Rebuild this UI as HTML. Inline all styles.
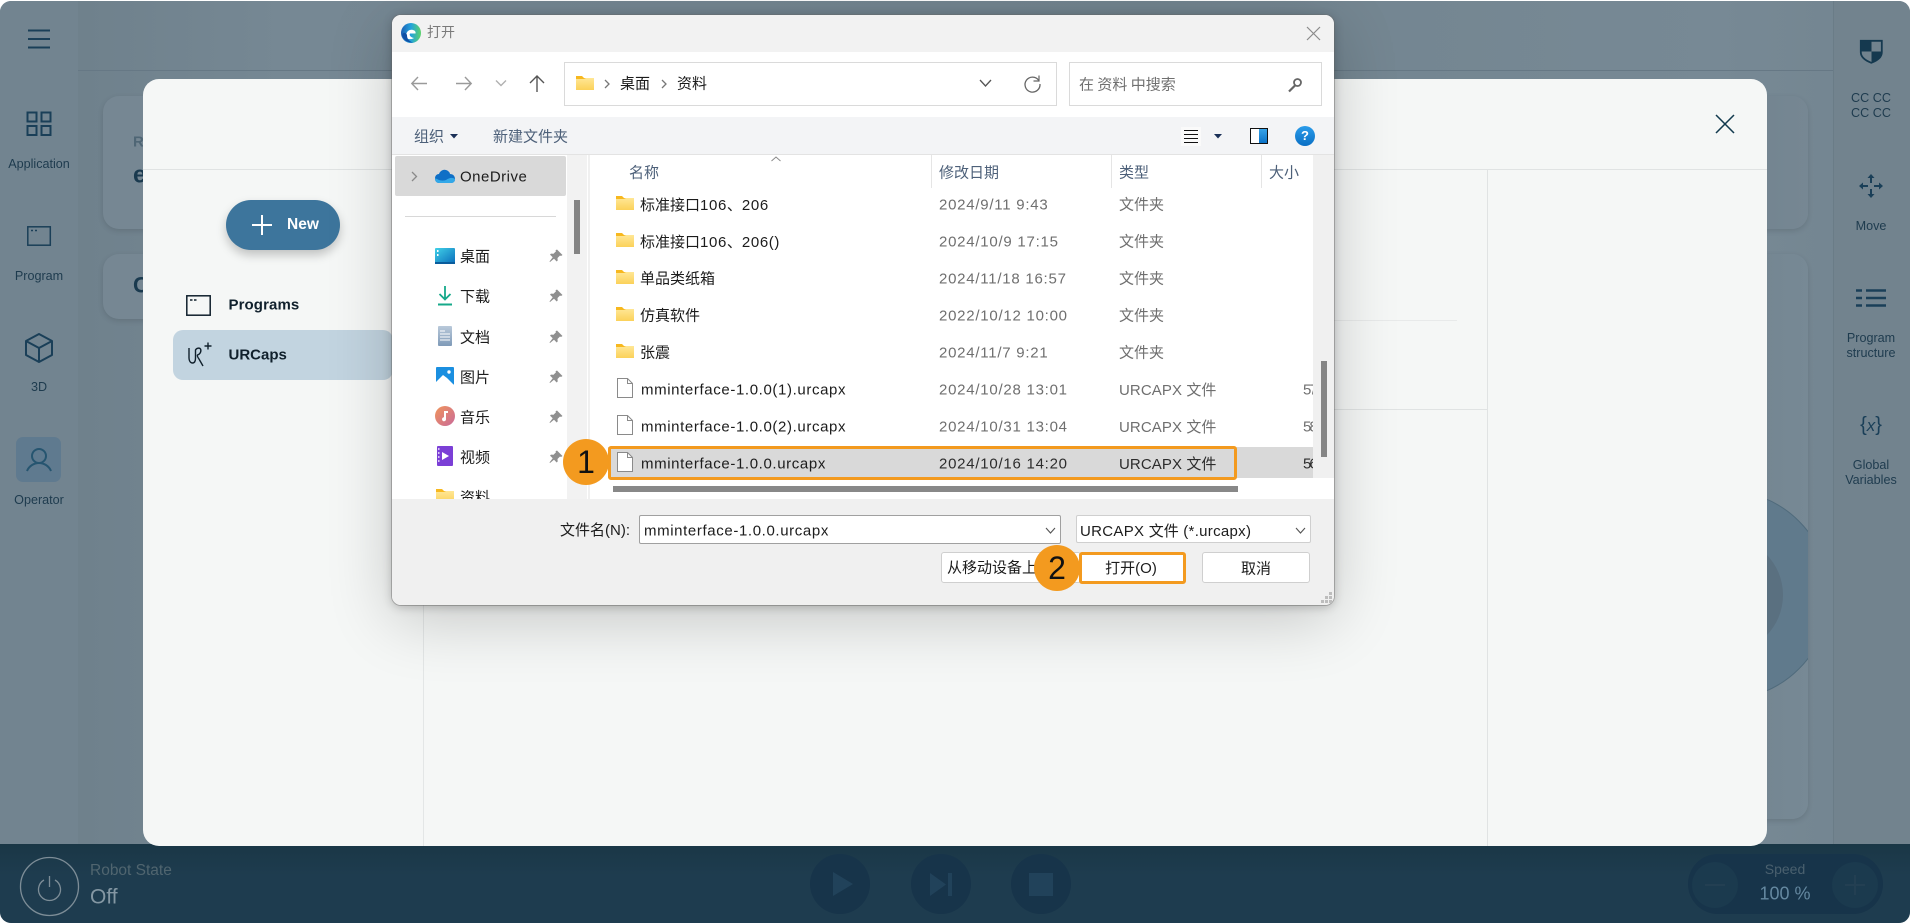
<!DOCTYPE html>
<html lang="zh"><head><meta charset="utf-8"><title>打开</title>
<style>
*{box-sizing:border-box}
html,body{margin:0;padding:0;width:1910px;height:923px;overflow:hidden;background:#fff}
body{position:relative;font-family:"Liberation Sans","Noto Sans CJK SC",sans-serif}
.a{position:absolute}
.t{position:absolute;white-space:nowrap;transform:translateY(-50%);line-height:1.3}
.c{text-align:center;transform:translate(-50%,-50%)}
.l{font-size:12.6px;color:#1e3b4e}
.s{font-family:"Noto Sans CJK SC","Liberation Sans",sans-serif;letter-spacing:0}
.f{font-size:15px;letter-spacing:.62px;color:#1c1c1c;margin-top:1px}
.d{font-size:15px;letter-spacing:.75px;color:#6f6f6f;margin-top:1px}
.u{letter-spacing:.1px}
.h{font-size:15px;color:#4d6079;font-family:"Noto Sans CJK SC",sans-serif}
.n{font-size:15px;color:#1c1c1c;font-family:"Noto Sans CJK SC",sans-serif}
svg{position:absolute;overflow:visible}
</style></head><body>

<svg width="0" height="0" style="position:absolute"><defs>
<linearGradient id="fg" x1="0" y1="0" x2="0" y2="1"><stop offset="0" stop-color="#ffe796"/><stop offset="1" stop-color="#fbd15a"/></linearGradient>
<symbol id="folder" viewBox="0 0 18 14"><path d="M0 0h6l2 2h10v12H0z" fill="#f7b81f"/><path d="M0 3h8l2-1h8v12H0z" fill="url(#fg)"/></symbol>
<symbol id="file" viewBox="0 0 16 20"><path d="M.5.5h10l5 5v14H.5z" fill="#fff" stroke="#8a8a8a"/><path d="M10.5.5v5h5" fill="none" stroke="#8a8a8a"/></symbol>
<symbol id="pin" viewBox="0 0 14 14"><path d="M8 .5l5.5 5.5-1.500 1-1-.5-2.500 2.500.2 2.500-1 1-2.700-2.700L1 13l-.5-.5 3.200-4.200L1 5.600l1-1 2.500.2L7 2.300l-.5-1z" fill="#8f8f8f"/></symbol>
</defs></svg>

<!-- App background -->
<div class="a" style="left:0;top:1px;width:1910px;height:922px;background:linear-gradient(90deg,#6c7e89,#768894 15%,#72848f 60%,#778995 90%,#72848f);border-radius:11px"></div>
<div class="a" style="left:0;top:1px;width:78px;height:850px;background:#728490;border-radius:11px 0 0 0"></div>
<div class="a" style="left:1833px;top:1px;width:77px;height:850px;background:#72838e;border-left:1px solid #6a7c87;border-radius:0 11px 0 0"></div>
<div class="a" style="left:78px;top:70px;width:1755px;height:1px;background:#667885"></div>
<!-- cards -->
<div class="a" style="left:103px;top:96px;width:300px;height:133px;border-radius:16px;background:#768793;box-shadow:0 2px 6px rgba(0,0,0,.12)"></div>
<div class="a" style="left:103px;top:254px;width:300px;height:65px;border-radius:16px;background:#768793;box-shadow:0 2px 6px rgba(0,0,0,.12)"></div>
<div class="t" style="left:133px;top:142px;font-size:15px;font-weight:700;color:#4f6675">R</div>
<div class="t" style="left:133px;top:175px;font-size:24px;font-weight:700;color:#1a3a4f">e</div>
<div class="t" style="left:133px;top:286px;font-size:22px;font-weight:700;color:#1a3a4f">C</div>
<div class="a" style="left:1600px;top:96px;width:208px;height:133px;border-radius:16px;background:linear-gradient(90deg,#6a7c87,#768793);box-shadow:0 2px 6px rgba(0,0,0,.12)"></div>
<div class="a" style="left:1600px;top:254px;width:208px;height:565px;border-radius:16px;background:linear-gradient(90deg,#6a7c87,#778995);box-shadow:0 2px 6px rgba(0,0,0,.12);overflow:hidden">
  <div class="a" style="left:20px;top:236px;width:210px;height:210px;border-radius:50%;background:#607a8c;border:1.500px solid #506b7c"></div>
  <div class="a" style="left:67px;top:283px;width:116px;height:116px;border-radius:50%;background:#5a7080"></div>
</div>

<!-- Left rail -->
<svg style="left:28px;top:29px" width="22" height="20"><path d="M0 1.500h22M0 10h22M0 18.500h22" stroke="#1a3f58" stroke-width="2"/></svg>
<svg style="left:26px;top:111px" width="26" height="25" fill="none" stroke="#1a3f58" stroke-width="2"><path d="M1.500 1.500h9v9h-9zM15.500 1.500h9v9h-9zM1.500 15h9v9h-9zM15.500 15h9v9h-9z"/></svg>
<div class="t c l" style="left:39px;top:163.500px">Application</div>
<svg style="left:27px;top:226px" width="24" height="20" fill="none" stroke="#1a3f58" stroke-width="1.500"><rect x=".8" y=".8" width="22.500" height="18.400"/><path d="M4 4.500h2M8 4.500h2" stroke-width="1.500"/></svg>
<div class="t c l" style="left:39px;top:275.500px">Program</div>
<svg style="left:25px;top:333px" width="28" height="30" fill="none" stroke="#1a3f58" stroke-width="2" stroke-linejoin="round"><path d="M14 1L27 8v14l-13 7L1 22V8zM1 8l13 7 13-7M14 15v14"/></svg>
<div class="t c l" style="left:39px;top:387px">3D</div>
<div class="a" style="left:16px;top:437px;width:45px;height:45px;border-radius:7px;background:#5f7a8f"></div>
<svg style="left:26px;top:448px" width="26" height="24" fill="none" stroke="#265570" stroke-width="2"><circle cx="13" cy="8" r="7"/><path d="M1 23c2-5 7-8 12-8s10 3 12 8"/></svg>
<div class="t c l" style="left:39px;top:500px">Operator</div>

<!-- Right rail -->
<svg style="left:1860px;top:40px" width="23" height="23"><path d="M.8 .8h21v11.500c0 5-5 8.500-10.500 10.500C6 20.800.8 17.300.8 12.300z" fill="none" stroke="#15394f" stroke-width="1.800"/><path d="M.8 .8h10.700v10.700H.8zM11.500 11.500h10.700c0 5-5 9-10.700 11z" fill="#15394f"/></svg>
<div class="t c l" style="left:1871px;top:98px">CC CC</div>
<div class="t c l" style="left:1871px;top:113px">CC CC</div>
<svg style="left:1859px;top:174px" width="24" height="24" fill="none" stroke="#1a3f58" stroke-width="2"><path d="M12 4v5M12 15v5M4 12h5M15 12h5"/><path d="M12 0l3.500 4h-7zM12 24l3.500-4h-7zM0 12l4-3.500v7zM24 12l-4-3.500v7z" fill="#1a3f58" stroke="none"/></svg>
<div class="t c l" style="left:1871px;top:225.500px">Move</div>
<svg style="left:1856px;top:289px" width="30" height="20" fill="none" stroke="#1a3f58" stroke-width="2.500"><path d="M0 1.500h6M10 1.500h20M0 9h6M10 9h20M0 16.500h6M10 16.500h20"/></svg>
<div class="t c l" style="left:1871px;top:338px">Program</div>
<div class="t c l" style="left:1871px;top:353px">structure</div>
<div class="t c" style="left:1871px;top:425px;font-size:20px;color:#1a3f58">{<i style="font-size:17px">x</i>}</div>
<div class="t c l" style="left:1871px;top:464.500px">Global</div>
<div class="t c l" style="left:1871px;top:479.500px">Variables</div>

<!-- Bottom bar -->
<div class="a" style="left:0;top:844px;width:1910px;height:79px;background:linear-gradient(180deg,#1a3746,#1e3c4f 40%);border-radius:0 0 11px 11px"></div>
<svg style="left:20px;top:857px" width="60" height="60" fill="none" stroke="#7d8d97" stroke-width="1.300"><circle cx="29.500" cy="29.500" r="29"/><path d="M29.500 19v11M24 23a11 11 0 1 0 11 0"/></svg>
<div class="t" style="left:90px;top:871px;font-size:15.500px;color:#50656f">Robot State</div>
<div class="t" style="left:90px;top:897px;font-size:21px;color:#8497a3">Off</div>
<div class="a" style="left:810px;top:854px;width:60px;height:60px;border-radius:50%;background:#17344a"></div>
<div class="a" style="left:911px;top:854px;width:60px;height:60px;border-radius:50%;background:#17344a"></div>
<div class="a" style="left:1011px;top:854px;width:60px;height:60px;border-radius:50%;background:#17344a"></div>
<svg style="left:833px;top:872px" width="22" height="24" fill="#21425a"><path d="M0 0l20 12L0 24z"/></svg>
<svg style="left:930px;top:873px" width="22" height="23" fill="#21425a"><path d="M0 0l16 11.500L0 23zM18 0h4v23h-4z"/></svg>
<div class="a" style="left:1029px;top:873px;width:24px;height:23px;background:#21425a"></div>
<div class="a" style="left:1688px;top:854px;width:195px;height:60px;border-radius:30px;background:#17344a"></div>
<div class="a" style="left:1692px;top:862px;width:46px;height:46px;border-radius:50%;background:#1b3a4e"></div>
<div class="a" style="left:1832px;top:862px;width:46px;height:46px;border-radius:50%;background:#1b3a4e"></div>
<svg style="left:1705px;top:874px" width="170" height="22" stroke="#233f52" stroke-width="2"><path d="M0 11h20M140 11h20M150 1v20"/></svg>
<div class="t c" style="left:1785px;top:869px;font-size:14px;color:#4a606e">Speed</div>
<div class="t c" style="left:1785px;top:894px;font-size:18px;color:#6488a0">100 %</div>

<!-- Modal -->
<div class="a" style="left:143px;top:79px;width:1624px;height:767px;background:#f5f7f6;border-radius:16px"></div>
<div class="a" style="left:143px;top:169px;width:1624px;height:1px;background:#e0e3e3"></div>
<div class="a" style="left:423px;top:170px;width:1px;height:676px;background:#e3e6e6"></div>
<div class="a" style="left:1487px;top:170px;width:1px;height:676px;background:#e0e3e3"></div>
<div class="a" style="left:1334px;top:320px;width:123px;height:1px;background:#e8eaea"></div>
<div class="a" style="left:1334px;top:409px;width:153px;height:1px;background:#e0e3e3"></div>
<svg style="left:1715px;top:114px" width="20" height="20" fill="none" stroke="#123a4e" stroke-width="1.500"><path d="M1 1l18 18M19 1L1 19"/></svg>

<div class="a" style="left:226px;top:200px;width:114px;height:50px;border-radius:25px;background:#3d759c;box-shadow:0 5px 10px rgba(0,0,0,.22)"></div>
<svg style="left:252px;top:215px" width="20" height="20" stroke="#fff" stroke-width="2"><path d="M0 10h20M10 0v20"/></svg>
<div class="t" style="left:287px;top:224.500px;font-size:15.500px;font-weight:700;color:#fff">New</div>

<svg style="left:186px;top:295px" width="25" height="21" fill="none" stroke="#10202c" stroke-width="1.500"><rect x=".8" y=".8" width="23.400" height="19.400"/><path d="M4 5h2.500M8 5h2.500"/></svg>
<div class="t" style="left:228.500px;top:304.500px;font-size:15px;letter-spacing:.1px;font-weight:700;color:#10202c">Programs</div>
<div class="a" style="left:173px;top:330px;width:220px;height:50px;border-radius:10px;background:#c2d4e0"></div>
<svg style="left:188px;top:342px" width="24" height="24" fill="none" stroke="#10202c" stroke-width="1.400"><path d="M1 6v10c0 3 1.500 5 3.500 5s3-2 3-5V8c1-2 4-2.500 5-1 1 2 0 5-3 6-.5 1 0 2 1.500 4l4 7"/><path d="M20 .5v7M16.500 4h7"/></svg>
<div class="t" style="left:228.500px;top:354.500px;font-size:15px;font-weight:700;color:#10202c">URCaps</div>

<!-- Dialog -->
<div class="a" style="left:392px;top:15px;width:942px;height:590px;background:#fff;border-radius:9px;box-shadow:0 14px 65px rgba(0,0,0,.2),0 2px 10px rgba(0,0,0,.22),0 0 0 1px rgba(120,120,120,.4);overflow:hidden"></div>
<div class="a" style="left:392px;top:15px;width:942px;height:37px;background:#f2f2f2;border-radius:9px 9px 0 0"></div>
<svg style="left:401px;top:23px" width="20" height="20"><defs><linearGradient id="eg" x1="0" y1="0" x2="1" y2="0"><stop offset="0" stop-color="#1a5db4"/><stop offset=".5" stop-color="#23a3dc"/><stop offset="1" stop-color="#5cd36a"/></linearGradient></defs><circle cx="10" cy="10" r="10" fill="url(#eg)"/><path d="M5 13c0-5 4-7 7-6 2 .5 3 2 2.500 3.500H9C8 12 9.500 14.500 13 15c-3 2-8 1.500-8-2z" fill="#fff"/><path d="M1 12c1 5 6 8 11 7.500C7 18 6 15 6 12 5 9 2 9 1 12z" fill="#0f4fa5"/></svg>
<div class="t" style="left:427px;top:32px;font-size:14px;color:#7a7a7a;font-family:'Noto Sans CJK SC',sans-serif">打开</div>
<svg style="left:1307px;top:27px" width="13" height="13" stroke="#8a8a8a" stroke-width="1.200"><path d="M0 0l13 13M13 0L0 13"/></svg>

<!-- toolbar -->
<svg style="left:411px;top:75px" width="140" height="18" fill="none" stroke="#9a9a9a" stroke-width="1.400"><path d="M16 8.500H1M7 2L.8 8.500 7 15"/><path d="M45 8.500h15M54 2l6.200 6.500L54 15"/><path d="M85 5.500l5 5 5-5" stroke="#b0b0b0"/><path d="M126 17V1M119 8l7-7 7 7" stroke="#555"/></svg>
<div class="a" style="left:564px;top:62px;width:493px;height:44px;border:1.500px solid #dadada;background:#fff"></div>
<svg class="a" style="left:576px;top:76px;position:absolute" width="18" height="14"><use href="#folder"/></svg>
<svg style="left:604px;top:79px" width="7" height="10" fill="none" stroke="#777" stroke-width="1.300"><path d="M1 1l4 4-4 4"/></svg>
<div class="t n" style="left:620px;top:83px">桌面</div>
<svg style="left:661px;top:79px" width="7" height="10" fill="none" stroke="#777" stroke-width="1.300"><path d="M1 1l4 4-4 4"/></svg>
<div class="t n" style="left:677px;top:83px">资料</div>
<svg style="left:979px;top:79px" width="13" height="9" fill="none" stroke="#555" stroke-width="1.300"><path d="M1 1l5.500 6L12 1"/></svg>
<svg style="left:1024px;top:75px" width="17" height="17" fill="none" stroke="#666" stroke-width="1.300"><path d="M14.800 5.500A7.500 7.500 0 1 0 16 9"/><path d="M15 .5v5.500h-5.500" stroke-width="1.200"/></svg>
<div class="a" style="left:1069px;top:62px;width:253px;height:44px;border:1.500px solid #dadada;background:#fff"></div>
<div class="t h" style="left:1079px;top:84px;color:#707070">在 资料 中搜索</div>
<svg style="left:1288px;top:78px" width="14" height="14" fill="none" stroke="#666" stroke-width="1.800"><circle cx="9.500" cy="4.500" r="3.500"/><path d="M7 7.500L1 13.500" stroke-width="2.200"/></svg>

<!-- command bar -->
<div class="a" style="left:392px;top:117px;width:942px;height:38px;background:#f3f4f6;border-bottom:1px solid #e3e3e3"></div>
<div class="t h" style="left:414px;top:136px;color:#4d6079">组织</div>
<svg style="left:450px;top:134px" width="8" height="5"><path d="M0 0h8L4 4.500z" fill="#1a2f57"/></svg>
<div class="t h" style="left:493px;top:136px">新建文件夹</div>
<div class="a" style="left:1181px;top:127px;width:20px;height:19px;background:#fafafa"></div>
<svg style="left:1184px;top:130px" width="14" height="13" stroke="#111" stroke-width="1"><path d="M0 .5h14M0 4.500h14M0 8.500h14M0 12.500h14"/></svg>
<svg style="left:1214px;top:134px" width="8" height="5"><path d="M0 0h8L4 4.500z" fill="#1a2f57"/></svg>
<svg style="left:1250px;top:128px" width="18" height="16"><defs><linearGradient id="pg" x1="0" y1="0" x2="0" y2="1"><stop offset="0" stop-color="#37a3e8"/><stop offset="1" stop-color="#0a72c7"/></linearGradient></defs><rect x=".5" y=".5" width="17" height="15" fill="#fff" stroke="#111"/><rect x="9" y="1" width="8" height="14" fill="url(#pg)"/></svg>
<div class="a" style="left:1295px;top:126px;width:20px;height:20px;border-radius:50%;background:linear-gradient(#2b9cea,#0a6fc4);color:#fff;font:700 13px/20px 'Liberation Sans',sans-serif;text-align:center">?</div>

<!-- bottom panel -->
<div class="a" style="left:392px;top:499px;width:942px;height:106px;background:#f0f0f0;border-radius:0 0 9px 9px"></div>

<!-- nav pane -->
<div class="a" style="left:392px;top:155px;width:175px;height:344px;background:#fff"></div>
<div class="a" style="left:567px;top:155px;width:20px;height:344px;background:#f2f2f2"></div>
<div class="a" style="left:588px;top:155px;width:2px;height:344px;background:#f0f0f0"></div>
<div class="a" style="left:574px;top:200px;width:6px;height:54px;background:#858585"></div>
<div class="a" style="left:395px;top:156px;width:171px;height:40px;background:#d9d9d9;border-radius:2px"></div>
<svg style="left:411px;top:171px" width="7" height="11" fill="none" stroke="#8a8a8a" stroke-width="1.300"><path d="M1 1l4.500 4.500L1 10"/></svg>
<svg style="left:435px;top:169px" width="20" height="14"><path d="M4 5c1-3 4-5 7-4s4 3 4 4c3 0 5 2 5 5s-2 4-4 4H4c-2 0-4-1.500-4-4.500S2 5 4 5z" fill="#0f6fc6"/><path d="M0 9.500C0 12.500 2 14 4 14h12c2 0 4-1 4-4-3-2-6-1-9 1-3 1-5 .5-7 0-2-1-4-2-4-1.500z" fill="#33a8e8"/></svg>
<div class="t" style="left:460px;top:177px;font-size:15px;letter-spacing:.5px;color:#1c1c1c">OneDrive</div>
<div class="a" style="left:405px;top:216px;width:151px;height:1px;background:#d8d8d8"></div>

<svg style="left:435px;top:248px" width="20" height="16"><defs><linearGradient id="dg" x1="0" y1="0" x2="1" y2="1"><stop offset="0" stop-color="#41d1e8"/><stop offset="1" stop-color="#0b6fbb"/></linearGradient></defs><rect width="20" height="15" rx="1" fill="url(#dg)"/><rect y="14" width="20" height="2" fill="#0a5c9c"/><rect x="2" y="2" width="1.500" height="2" fill="#fff"/><rect x="2" y="6" width="1.500" height="2" fill="#fff"/></svg>
<div class="t n" style="left:460px;top:256px">桌面</div>
<svg style="left:549px;top:249px" width="14" height="14"><use href="#pin"/></svg>
<svg style="left:438px;top:286px" width="14" height="20" fill="none" stroke="#16a98a" stroke-width="1.800"><path d="M7 0v13M1.500 8l5.500 5.500L12.500 8"/><path d="M0 18.500h14" stroke-width="2"/></svg>
<div class="t n" style="left:460px;top:296px">下载</div>
<svg style="left:549px;top:289px" width="14" height="14"><use href="#pin"/></svg>
<svg style="left:438px;top:326px" width="14" height="20"><defs><linearGradient id="dc" x1="0" y1="0" x2="0" y2="1"><stop offset="0" stop-color="#b9c9da"/><stop offset="1" stop-color="#7f9ab8"/></linearGradient></defs><rect width="14" height="20" rx="1" fill="url(#dc)"/><path d="M2 5h5M2 8h10M2 11h10M2 14h10" stroke="#fff" stroke-width="1"/></svg>
<div class="t n" style="left:460px;top:337px">文档</div>
<svg style="left:549px;top:330px" width="14" height="14"><use href="#pin"/></svg>
<svg style="left:436px;top:367px" width="18" height="18"><rect width="18" height="18" rx="1" fill="#1b8fe0"/><path d="M0 18V15l7-7 4 3 3 3 4 4z" fill="#fff"/><circle cx="13" cy="5" r="1.700" fill="#fff"/></svg>
<div class="t n" style="left:460px;top:377px">图片</div>
<svg style="left:549px;top:370px" width="14" height="14"><use href="#pin"/></svg>
<svg style="left:435px;top:406px" width="20" height="20"><defs><linearGradient id="mg" x1="0" y1="0" x2="1" y2="1"><stop offset="0" stop-color="#f0945a"/><stop offset="1" stop-color="#c96a9a"/></linearGradient></defs><circle cx="10" cy="10" r="10" fill="url(#mg)"/><path d="M9 5h4v2h-2v6a2 2 0 1 1-2-1.700z" fill="#fff"/></svg>
<div class="t n" style="left:460px;top:417px">音乐</div>
<svg style="left:549px;top:410px" width="14" height="14"><use href="#pin"/></svg>
<svg style="left:437px;top:446px" width="16" height="20"><rect width="16" height="20" rx="1" fill="#7b3fd6"/><path d="M5 6l7 4-7 4z" fill="#fff"/><path d="M1 2h1.500v2H1zM1 6h1.500v2H1zM1 10h1.500v2H1zM1 14h1.500v2H1z" fill="#d9c5f5"/></svg>
<div class="t n" style="left:460px;top:457px">视频</div>
<svg style="left:549px;top:450px" width="14" height="14"><use href="#pin"/></svg>
<div class="a" style="left:392px;top:485px;width:175px;height:14px;overflow:hidden">
  <svg style="left:44px;top:4px" width="18" height="14"><use href="#folder"/></svg>
  <div class="t n" style="left:68px;top:12px">资料</div>
</div>

<!-- list -->
<div class="a" style="left:592px;top:155px;width:721px;height:344px;background:#fff;overflow:hidden"></div>
<div class="a" style="left:1313px;top:155px;width:21px;height:344px;background:#f0f0f0"></div>
<div class="a" style="left:1321px;top:361px;width:6px;height:96px;background:#858585"></div>
<div class="a" style="left:1313px;top:478px;width:21px;height:21px;background:#fff"></div>
<svg style="left:771px;top:156px" width="10" height="6" fill="none" stroke="#8a8a8a"><path d="M.5 5l4.500-4 4.500 4"/></svg>
<div class="t h" style="left:629px;top:172px">名称</div>
<div class="a" style="left:931px;top:155px;width:1px;height:33px;background:#e5e5e5"></div>
<div class="t h" style="left:939px;top:172px">修改日期</div>
<div class="a" style="left:1111px;top:155px;width:1px;height:33px;background:#e5e5e5"></div>
<div class="t h" style="left:1119px;top:172px">类型</div>
<div class="a" style="left:1261px;top:155px;width:1px;height:33px;background:#e5e5e5"></div>
<div class="t h" style="left:1269px;top:172px">大小</div>

<div class="a" style="left:608px;top:447px;width:705px;height:31px;background:#d9d9d9"></div>

<svg style="left:616px;top:196px" width="18" height="14"><use href="#folder"/></svg>
<div class="t f" style="left:640px;top:204px"><span class="s">标准接口</span>106<span class="s">、</span>206</div>
<div class="t d" style="left:939px;top:204px">2024/9/11 9:43</div>
<div class="t n" style="left:1119px;top:204px;color:#6f6f6f">文件夹</div>

<svg style="left:616px;top:233px" width="18" height="14"><use href="#folder"/></svg>
<div class="t f" style="left:640px;top:241px"><span class="s">标准接口</span>106<span class="s">、</span>206()</div>
<div class="t d" style="left:939px;top:241px">2024/10/9 17:15</div>
<div class="t n" style="left:1119px;top:241px;color:#6f6f6f">文件夹</div>

<svg style="left:616px;top:270px" width="18" height="14"><use href="#folder"/></svg>
<div class="t n" style="left:640px;top:278px">单品类纸箱</div>
<div class="t d" style="left:939px;top:278px">2024/11/18 16:57</div>
<div class="t n" style="left:1119px;top:278px;color:#6f6f6f">文件夹</div>

<svg style="left:616px;top:307px" width="18" height="14"><use href="#folder"/></svg>
<div class="t n" style="left:640px;top:315px">仿真软件</div>
<div class="t d" style="left:939px;top:315px">2022/10/12 10:00</div>
<div class="t n" style="left:1119px;top:315px;color:#6f6f6f">文件夹</div>

<svg style="left:616px;top:344px" width="18" height="14"><use href="#folder"/></svg>
<div class="t n" style="left:640px;top:352px">张震</div>
<div class="t d" style="left:939px;top:352px">2024/11/7 9:21</div>
<div class="t n" style="left:1119px;top:352px;color:#6f6f6f">文件夹</div>

<svg style="left:617px;top:378px" width="16" height="20"><use href="#file"/></svg>
<div class="t f" style="left:641px;top:389px">mminterface-1.0.0(1).urcapx</div>
<div class="t d" style="left:939px;top:389px">2024/10/28 13:01</div>
<div class="t d u" style="left:1119px;top:389px">URCAPX <span class="s">文件</span></div>
<div class="t d" style="left:1303px;top:389px;width:10px;overflow:hidden;letter-spacing:-2px">57</div>

<svg style="left:617px;top:415px" width="16" height="20"><use href="#file"/></svg>
<div class="t f" style="left:641px;top:426px">mminterface-1.0.0(2).urcapx</div>
<div class="t d" style="left:939px;top:426px">2024/10/31 13:04</div>
<div class="t d u" style="left:1119px;top:426px">URCAPX <span class="s">文件</span></div>
<div class="t d" style="left:1303px;top:426px;width:10px;overflow:hidden;letter-spacing:-2px">58</div>

<svg style="left:617px;top:452px" width="16" height="20"><use href="#file"/></svg>
<div class="t f" style="left:641px;top:463px">mminterface-1.0.0.urcapx</div>
<div class="t d" style="left:939px;top:463px;color:#2c2c2c">2024/10/16 14:20</div>
<div class="t d u" style="left:1119px;top:463px;color:#2c2c2c">URCAPX <span class="s">文件</span></div>
<div class="t d" style="left:1303px;top:463px;width:10px;overflow:hidden;letter-spacing:-2px;color:#2c2c2c">56</div>

<div class="a" style="left:608px;top:446px;width:629px;height:34px;border:3px solid #f39a1f;border-radius:3px"></div>
<div class="a" style="left:613px;top:486px;width:625px;height:6px;background:#888"></div>

<!-- form -->
<div class="t" style="left:560px;top:530px;font-size:15px;color:#1c1c1c"><span class="s">文件名</span>(N):</div>
<div class="a" style="left:639px;top:515px;width:422px;height:29px;background:#fff;border:1px solid #a0a0a0;border-radius:2px"></div>
<div class="t f" style="left:644px;top:530px">mminterface-1.0.0.urcapx</div>
<svg style="left:1045px;top:527px" width="11" height="7" fill="none" stroke="#555" stroke-width="1.100"><path d="M1 1l4.500 5L10 1"/></svg>
<div class="a" style="left:1076px;top:515px;width:235px;height:28px;background:#fff;border:1px solid #cfcfcf;border-radius:2px"></div>
<div class="t f" style="left:1080px;top:530px;letter-spacing:.3px">URCAPX <span class="s">文件</span> (*.urcapx)</div>
<svg style="left:1295px;top:527px" width="11" height="7" fill="none" stroke="#555" stroke-width="1.100"><path d="M1 1l4.500 5L10 1"/></svg>
<div class="a" style="left:941px;top:552px;width:140px;height:31px;background:#fff;border:1px solid #cfcfcf;border-radius:3px"></div>
<div class="t n" style="left:947px;top:567px">从移动设备上传</div>
<div class="a" style="left:1079px;top:552px;width:107px;height:32px;background:#fff;border:3px solid #f39a1f;border-radius:3px"></div>
<div class="t c f" style="left:1131px;top:567px;letter-spacing:0"><span class="s">打开</span>(O)</div>
<div class="a" style="left:1202px;top:552px;width:108px;height:31px;background:#fff;border:1px solid #cfcfcf;border-radius:3px"></div>
<div class="t c n" style="left:1256px;top:568px">取消</div>
<svg style="left:1321px;top:592px" width="11" height="11" fill="#bdbdbd"><path d="M8 0h3v3H8zM4 4h3v3H4zM8 4h3v3H8zM0 8h3v3H0zM4 8h3v3H4zM8 8h3v3H8z"/></svg>

<!-- callouts -->
<div class="a" style="left:563px;top:439px;width:46px;height:46px;border-radius:50%;background:#f39a1f"></div>
<div class="t c" style="left:586px;top:463px;font-size:32px;color:#111">1</div>
<div class="a" style="left:1034px;top:545px;width:46px;height:46px;border-radius:50%;background:#f39a1f"></div>
<div class="t c" style="left:1057px;top:569px;font-size:32px;color:#111">2</div>

</body></html>
